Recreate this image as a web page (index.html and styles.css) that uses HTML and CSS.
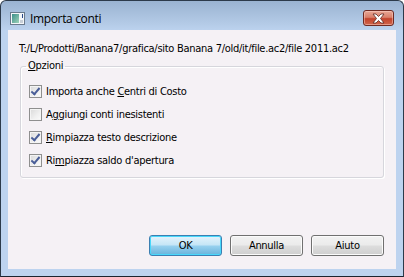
FILE: index.html
```html
<!DOCTYPE html>
<html lang="it">
<head>
<meta charset="utf-8">
<title>Importa conti</title>
<link rel="stylesheet" href="styles.css">
</head>
<body>
<div class="window">
  <div class="titlebar">
    <svg class="app-icon" width="15" height="13" viewBox="0 0 15 13">
      <defs>
        <linearGradient id="ig" x1="0" y1="0" x2="1" y2="1">
          <stop offset="0" stop-color="#3c8f8a"/>
          <stop offset="1" stop-color="#9fd3b8"/>
        </linearGradient>
      </defs>
      <rect x="0.5" y="0.5" width="14" height="12" fill="#f4f6f8" stroke="#6a7a8c"/>
      <rect x="2" y="2" width="7" height="9" fill="url(#ig)"/>
      <rect x="10" y="8" width="3" height="3" fill="#c8d0d8"/>
      <rect x="12" y="2" width="1" height="4" fill="#2a4a8a"/>
    </svg>
    <span class="title">Importa conti</span>
    <div class="close">
      <svg width="15" height="11" viewBox="0 0 15 11">
        <path d="M2 1 L5 1 L7.5 3.5 L10 1 L13 1 L9.5 5.5 L13 10 L10 10 L7.5 7.5 L5 10 L2 10 L5.5 5.5 Z" fill="#ffffff" stroke="#5a2a24" stroke-width="0.8" stroke-linejoin="round"/>
      </svg>
    </div>
  </div>
  <div class="client">
    <div class="path">T:/L/Prodotti/Banana7/grafica/sito Banana 7/old/it/file.ac2/file 2011.ac2</div>
    <fieldset class="group">
      <legend class="group-label"><u>O</u>pzioni</legend>
      <div class="options">
        <label class="option">
          <span class="check checked"></span>
          <span>Importa anche <u>C</u>entri di Costo</span>
        </label>
        <label class="option">
          <span class="check"></span>
          <span>A<u>g</u>giungi conti inesistenti</span>
        </label>
        <label class="option">
          <span class="check checked"></span>
          <span><u>R</u>impiazza testo descrizione</span>
        </label>
        <label class="option">
          <span class="check checked"></span>
          <span>Ri<u>m</u>piazza saldo d'apertura</span>
        </label>
      </div>
    </fieldset>
    <div class="buttons">
      <button class="btn default">OK</button>
      <button class="btn">Annulla</button>
      <button class="btn">Aiuto</button>
    </div>
  </div>
</div>
</body>
</html>
```
FILE: styles.css
```css
html, body {
  margin: 0;
  padding: 0;
  background: #ffffff;
}

.window {
  width: 404px;
  height: 277px;
  box-sizing: border-box;
  border: 1px solid #2c3a4a;
  border-bottom-color: #1a2430;
  border-radius: 6px 6px 0 0;
  background: linear-gradient(to bottom, #9ab3d1 0px, #b3cae6 22px, #bdd3ef 30px, #bdd3ef 100%);
  display: flex;
  flex-direction: column;
  overflow: hidden;
}

.titlebar {
  height: 29px;
  box-sizing: border-box;
  padding: 5px 9px 0 9px;
  display: flex;
  align-items: center;
  flex-shrink: 0;
}

.app-icon {
  display: block;
  flex-shrink: 0;
}

.title {
  margin-left: 5px;
  font-family: "Open Sans", "Noto Sans", sans-serif;
  font-size: 12px;
  letter-spacing: -0.35px;
  color: #000000;
  flex: 1;
}

.close {
  width: 31px;
  height: 16px;
  box-sizing: border-box;
  border: 1px solid #6e2a22;
  border-radius: 3px;
  background: linear-gradient(to bottom, #e8a796 0%, #d9806b 45%, #c2432c 55%, #d0654b 100%);
  display: flex;
  align-items: center;
  justify-content: center;
  box-shadow: inset 0 0 0 1px rgba(255, 220, 210, 0.45);
}

.close svg {
  display: block;
}

.client {
  flex: 1;
  margin: 0 7px 7px 7px;
  background: #f5f1f5;
  display: flex;
  flex-direction: column;
  padding: 0 12px 13px 11px;
  font-family: "DejaVu Sans Condensed", "DejaVu Sans", sans-serif;
  font-size: 11px;
  letter-spacing: -0.28px;
  color: #000000;
}

.path {
  margin-top: 12px;
  line-height: 14px;
  white-space: nowrap;
}

.group {
  margin: 3px 0 0 1px;
  padding: 7px 0 5px 5px;
  border: 1px solid #d6d6dc;
  border-radius: 3px;
  box-shadow: 1px 1px 0 #ffffff inset, 1px 1px 0 #ffffff;
  min-width: 0;
}

.group-label {
  padding: 0 2px;
  line-height: 14px;
}

.options {
  display: flex;
  flex-direction: column;
  padding-left: 3px;
}

.option {
  height: 23px;
  display: flex;
  align-items: center;
}

.check {
  width: 13px;
  height: 13px;
  box-sizing: border-box;
  border: 1px solid #8f8f8f;
  background: linear-gradient(135deg, #d9d9d9 0%, #f0f0f0 60%, #fbfbfb 100%);
  box-shadow: inset 0 0 0 1px #f4f4f4;
  margin-right: 4px;
  flex-shrink: 0;
  position: relative;
}

.check.checked::after {
  content: "";
  position: absolute;
  left: 3px;
  top: 0px;
  width: 3px;
  height: 7px;
  border: solid #4a5e98;
  border-width: 0 2px 2px 0;
  transform: rotate(40deg);
}

.buttons {
  margin-top: auto;
  display: flex;
  justify-content: flex-end;
  gap: 8px;
}

.btn {
  width: 73px;
  height: 21px;
  box-sizing: border-box;
  border: 1px solid #707070;
  border-radius: 3px;
  background: linear-gradient(to bottom, #f2f2f2 0%, #ebebeb 48%, #dddddd 52%, #cfcfcf 100%);
  box-shadow: inset 0 0 0 1px #fbfbfb;
  font-family: "DejaVu Sans Condensed", "DejaVu Sans", sans-serif;
  font-size: 11px;
  letter-spacing: -0.28px;
  color: #000000;
  padding: 0;
}

.btn.default {
  border-color: #3c7fb1;
  background: linear-gradient(to bottom, #e5f4fc 0%, #c4e5f6 48%, #98d1ef 52%, #68b3db 100%);
  box-shadow: inset 0 0 0 1px #48d8fb;
}
```
